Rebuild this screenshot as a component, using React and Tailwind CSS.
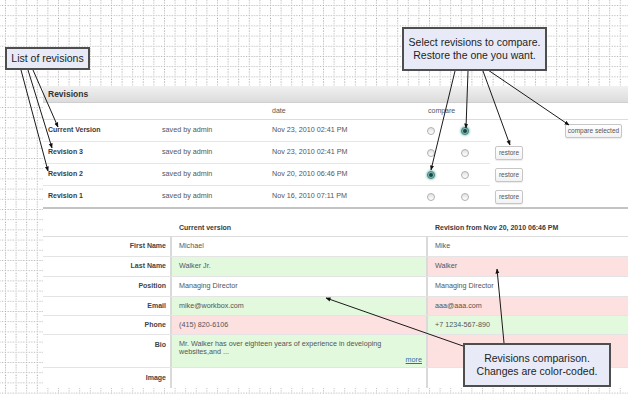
import React from "react";

const revisions = [
  { name: "Current Version", date: "Nov 23, 2010 02:41 PM", a: false, b: true, restore: false, compare: true },
  { name: "Revision 3", date: "Nov 23, 2010 02:41 PM", a: false, b: false, restore: true },
  { name: "Revision 2", date: "Nov 20, 2010 06:46 PM", a: true, b: false, restore: true },
  { name: "Revision 1", date: "Nov 16, 2010 07:11 PM", a: false, b: false, restore: true },
];

const GREEN = "bg-[#e3f9dd]";
const RED = "bg-[#fde0e0]";

const fields = [
  { label: "First Name", cur: "Michael", rev: "Mike", h: "h-[20px]", cc: "", rc: "" },
  { label: "Last Name", cur: "Walker Jr.", rev: "Walker", h: "h-[20px]", cc: GREEN, rc: RED },
  { label: "Position", cur: "Managing Director", rev: "Managing Director", h: "h-[20px]", cc: "", rc: "" },
  { label: "Email", cur: "mike@workbox.com", rev: "aaa@aaa.com", h: "h-[19px]", cc: GREEN, rc: RED },
  { label: "Phone", cur: "(415) 820-6106", rev: "+7 1234-567-890", h: "h-[19px]", cc: RED, rc: GREEN },
  { label: "Bio", bio: true, h: "h-[33px]", cc: GREEN, rc: RED },
  { label: "Image", cur: "", rev: "", h: "h-[20px]", cc: "", rc: "", last: true },
];

const Radio = ({ checked }) =>
  checked ? (
    <span className="flex h-[8px] w-[8px] items-center justify-center rounded-full border border-[#4f827d] bg-[#7fbcb4] shadow-[0_0_2px_1px_#9fd6ce]">
      <span className="h-[4px] w-[4px] rounded-full bg-[#23423f]" />
    </span>
  ) : (
    <span className="block h-[8px] w-[8px] rounded-full border border-[#b0b0b0] bg-gradient-to-b from-[#e2e2e2] to-[#ffffff]" />
  );

const Btn = ({ children, w }) => (
  <span
    className={`flex h-[14px] ${w} items-center justify-center rounded-[2px] border border-[#c6c6c6] bg-gradient-to-b from-white to-[#f2f2f2] text-[6.5px] text-[#555] shadow-[0_1px_1px_rgba(0,0,0,0.08)]`}
  >
    {children}
  </span>
);

const Callout = ({ className, children }) => (
  <div
    className={`absolute flex flex-col items-center justify-center border-2 border-[#4e4e4e] bg-[#e8ebf7] text-center text-[10.5px] leading-[13px] text-[#1e1e1e] ${className}`}
  >
    {children}
  </div>
);

const Arrows = () => {
  const lines = [
    [21, 70, 48, 171],
    [28, 70, 52, 148],
    [33, 70, 58, 127],
    [455, 71, 431, 170],
    [468, 71, 466, 128],
    [483, 71, 510, 145],
    [488, 70, 569, 125],
    [504, 343, 497, 269],
    [463, 346, 326, 298],
  ];
  return (
    <svg className="pointer-events-none absolute left-0 top-0" width="628" height="394">
      <defs>
        <marker id="ah" viewBox="0 0 10 10" refX="9" refY="5" markerWidth="5" markerHeight="5" orient="auto">
          <path d="M0 1L10 5L0 9z" fill="#111" />
        </marker>
      </defs>
      {lines.map(([x1, y1, x2, y2], i) => (
        <line key={i} x1={x1} y1={y1} x2={x2} y2={y2} stroke="#1a1a1a" strokeWidth="1" markerEnd="url(#ah)" />
      ))}
    </svg>
  );
};

const Grid = () => (
  <svg className="absolute left-0 top-0" width="628" height="394">
    <defs>
      <pattern id="grid" x="5" y="5" width="10.6" height="10.2" patternUnits="userSpaceOnUse">
        <path d="M0 0.5H10.6" stroke="#a8a8a8" strokeDasharray="1 1.6" />
        <path d="M0.5 0V10.2" stroke="#a8a8a8" strokeDasharray="1 1.6" />
      </pattern>
    </defs>
    <rect width="628" height="394" fill="url(#grid)" />
  </svg>
);

export default function App() {
  return (
    <div className="relative h-[394px] w-[628px] overflow-hidden bg-white font-['Liberation_Sans',Arial,sans-serif] text-[#555]">
      <Grid />

      <div className="relative pl-[43px] pt-[86px]">
        <div className="w-[585px] bg-white">
          {/* header */}
          <div className="flex h-[17px] items-center border-b border-[#cfcfcf] bg-gradient-to-b from-[#f1f1f1] to-[#dcdcdc] pl-[5px] text-[8.5px] font-bold text-[#333]">
            Revisions
          </div>

          {/* revisions list */}
          <div className="flex h-[17px] items-center border-b border-[#dcdcdc] text-[7px] text-[#555]">
            <span className="ml-[229px] w-[156px] shrink-0">date</span>
            <span>compare</span>
          </div>

          <div className="border-b-2 border-[#c4c4c4]">
            {revisions.map((r, i) => (
              <div key={r.name} className="flex">
                <div
                  className={`flex w-[447px] shrink-0 items-center text-[7.2px] ${
                    i < revisions.length - 1 ? "h-[22px] border-b border-[#e6e6e6]" : "h-[21px]"
                  }`}
                >
                  <span className="w-[119px] shrink-0 pl-[5px] text-[7px] font-bold text-[#3a3a3a]">{r.name}</span>
                  <span className="w-[110px] shrink-0">saved by admin</span>
                  <span className="w-[155px] shrink-0">{r.date}</span>
                  <span className="w-[34px] shrink-0">
                    <Radio checked={r.a} />
                  </span>
                  <span className="w-[29px] shrink-0">
                    <Radio checked={r.b} />
                  </span>
                </div>
                <div className="flex flex-1 items-center">
                  {r.restore && (
                    <span className="ml-[5px]">
                      <Btn w="w-[28px]">restore</Btn>
                    </span>
                  )}
                  {r.compare && (
                    <span className="ml-[75px]">
                      <Btn w="w-[57px]">compare selected</Btn>
                    </span>
                  )}
                </div>
              </div>
            ))}
          </div>

          {/* comparison */}
          <div className="mt-[11px] flex h-[17px] items-center border-b border-[#dcdcdc] text-[7px] font-bold text-[#3a3a3a]">
            <span className="w-[136px] shrink-0" />
            <span className="w-[256px] shrink-0">Current version</span>
            <span>Revision from Nov 20, 2010 06:46 PM</span>
          </div>

          {fields.map((f) => (
            <div key={f.label} className={`flex ${f.h} ${f.last ? "" : "border-b border-[#e4e4e4]"} text-[7.2px]`}>
              <div
                className={`flex w-[129px] shrink-0 justify-end border-r-2 border-[#dadada] pr-[4px] text-[7px] font-bold text-[#444] ${
                  f.bio ? "items-start pt-[5px]" : "items-center"
                }`}
              >
                {f.label}
              </div>
              {f.bio ? (
                <div className={`flex w-[256px] shrink-0 flex-col border-r-2 border-[#dadada] pl-[7px] pr-[4px] pt-[5px] leading-[7.5px] ${f.cc}`}>
                  <span>
                    Mr. Walker has over eighteen years of experience in developing
                    <br />
                    websites,and ...
                  </span>
                  <a className="mt-[1px] self-end text-[#2a6fb0] underline">more</a>
                </div>
              ) : (
                <div className={`flex w-[256px] shrink-0 items-center border-r-2 border-[#dadada] pl-[7px] ${f.cc}`}>{f.cur}</div>
              )}
              <div className={`flex flex-1 items-center pl-[7px] ${f.rc}`}>{f.rev}</div>
            </div>
          ))}
        </div>
      </div>

      <Arrows />

      <Callout className="left-[5px] top-[47px] h-[23px] w-[85px]">List of revisions</Callout>
      <Callout className="left-[402px] top-[27px] h-[44px] w-[145px]">
        <span>Select revisions to compare.</span>
        <span>Restore the one you want.</span>
      </Callout>
      <Callout className="left-[463px] top-[343px] h-[44px] w-[148px]">
        <span>Revisions comparison.</span>
        <span>Changes are color-coded.</span>
      </Callout>
    </div>
  );
}
